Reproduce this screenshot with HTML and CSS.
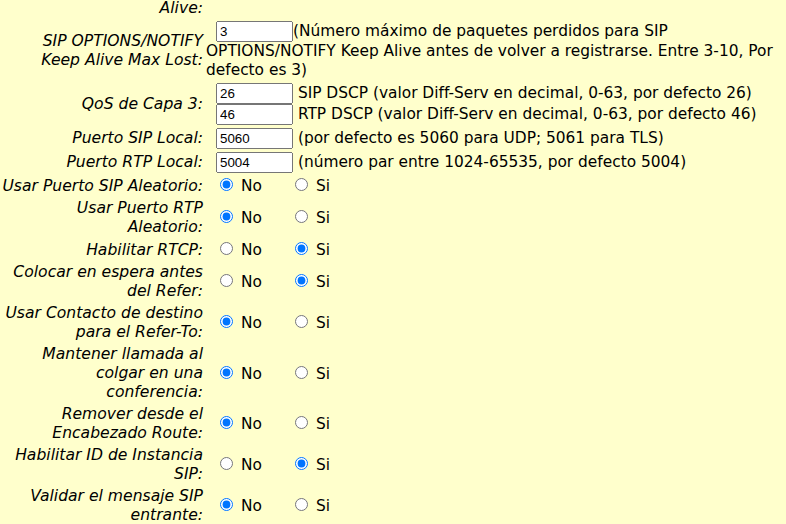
FILE: index.html
```html
<!DOCTYPE html>
<html lang="es">
<head>
<meta charset="utf-8">
<title>Configuración SIP</title>
<link rel="stylesheet" href="styles.css">
</head>
<body>
<table class="form">
  <tr>
    <td class="lbl">Habilitar SIP OPTIONS/NOTIFY Keep Alive:</td>
    <td class="val"><span class="radios"><label class="opt"><input type="radio" name="ka" checked>No</label><label class="opt"><input type="radio" name="ka">Si</label></span></td>
  </tr>
  <tr>
    <td class="lbl">SIP OPTIONS/NOTIFY Keep Alive Max Lost:</td>
    <td class="val"><input class="txt" type="text" value="3">(Número máximo de paquetes perdidos para SIP OPTIONS/NOTIFY Keep Alive antes de volver a registrarse. Entre 3-10, Por defecto es 3)</td>
  </tr>
  <tr>
    <td class="lbl">QoS de Capa 3:</td>
    <td class="val"><input class="txt" type="text" value="26"> SIP DSCP (valor Diff-Serv en decimal, 0-63, por defecto 26)<br><input class="txt" type="text" value="46"> RTP DSCP (valor Diff-Serv en decimal, 0-63, por defecto 46)</td>
  </tr>
  <tr>
    <td class="lbl">Puerto SIP Local:</td>
    <td class="val"><input class="txt" type="text" value="5060"> (por defecto es 5060 para UDP; 5061 para TLS)</td>
  </tr>
  <tr>
    <td class="lbl">Puerto RTP Local:</td>
    <td class="val"><input class="txt" type="text" value="5004"> (número par entre 1024-65535, por defecto 5004)</td>
  </tr>
  <tr>
    <td class="lbl">Usar Puerto SIP Aleatorio:</td>
    <td class="val"><span class="radios"><label class="opt"><input type="radio" name="r1" checked>No</label><label class="opt"><input type="radio" name="r1">Si</label></span></td>
  </tr>
  <tr>
    <td class="lbl">Usar Puerto RTP Aleatorio:</td>
    <td class="val"><span class="radios"><label class="opt"><input type="radio" name="r2" checked>No</label><label class="opt"><input type="radio" name="r2">Si</label></span></td>
  </tr>
  <tr>
    <td class="lbl">Habilitar RTCP:</td>
    <td class="val"><span class="radios"><label class="opt"><input type="radio" name="r3">No</label><label class="opt"><input type="radio" name="r3" checked>Si</label></span></td>
  </tr>
  <tr>
    <td class="lbl">Colocar en espera antes del Refer:</td>
    <td class="val"><span class="radios"><label class="opt"><input type="radio" name="r4">No</label><label class="opt"><input type="radio" name="r4" checked>Si</label></span></td>
  </tr>
  <tr>
    <td class="lbl">Usar Contacto de destino para el Refer-To:</td>
    <td class="val"><span class="radios"><label class="opt"><input type="radio" name="r5" checked>No</label><label class="opt"><input type="radio" name="r5">Si</label></span></td>
  </tr>
  <tr>
    <td class="lbl">Mantener llamada al colgar en una conferencia:</td>
    <td class="val"><span class="radios"><label class="opt"><input type="radio" name="r6" checked>No</label><label class="opt"><input type="radio" name="r6">Si</label></span></td>
  </tr>
  <tr>
    <td class="lbl">Remover desde el Encabezado Route:</td>
    <td class="val"><span class="radios"><label class="opt"><input type="radio" name="r7" checked>No</label><label class="opt"><input type="radio" name="r7">Si</label></span></td>
  </tr>
  <tr>
    <td class="lbl">Habilitar ID de Instancia SIP:</td>
    <td class="val"><span class="radios"><label class="opt"><input type="radio" name="r8">No</label><label class="opt"><input type="radio" name="r8" checked>Si</label></span></td>
  </tr>
  <tr>
    <td class="lbl">Validar el mensaje SIP entrante:</td>
    <td class="val"><span class="radios"><label class="opt"><input type="radio" name="r9" checked>No</label><label class="opt"><input type="radio" name="r9">Si</label></span></td>
  </tr>
</table>
</body>
</html>
```
FILE: styles.css
```css
html, body {
  margin: 0;
  padding: 0;
  background: #ffffcc;
  overflow: hidden;
}
body {
  font-family: "DejaVu Sans", sans-serif;
  font-size: 15.4px;
  line-height: 19px;
  color: #000;
}
.form {
  border-collapse: separate;
  border-spacing: 1px;
  margin-top: -41px;
}
.form td {
  padding: 1px;
  vertical-align: middle;
}
.lbl {
  width: 201px;
  text-align: right;
  font-style: italic;
  font-size: 15.6px;
}
.val {
  padding-left: 1px;
}
.txt {
  font-family: "Liberation Sans", sans-serif;
  font-size: 13.333px;
  width: 77px;
  box-sizing: border-box;
  margin-left: 10px;
}
.radios {
  padding-left: 9px;
}
.opt {
  display: inline-block;
  width: 75px;
}
.opt:last-child {
  width: auto;
}
.opt input {
  margin: 2px 8px 0 5px;
}
```
